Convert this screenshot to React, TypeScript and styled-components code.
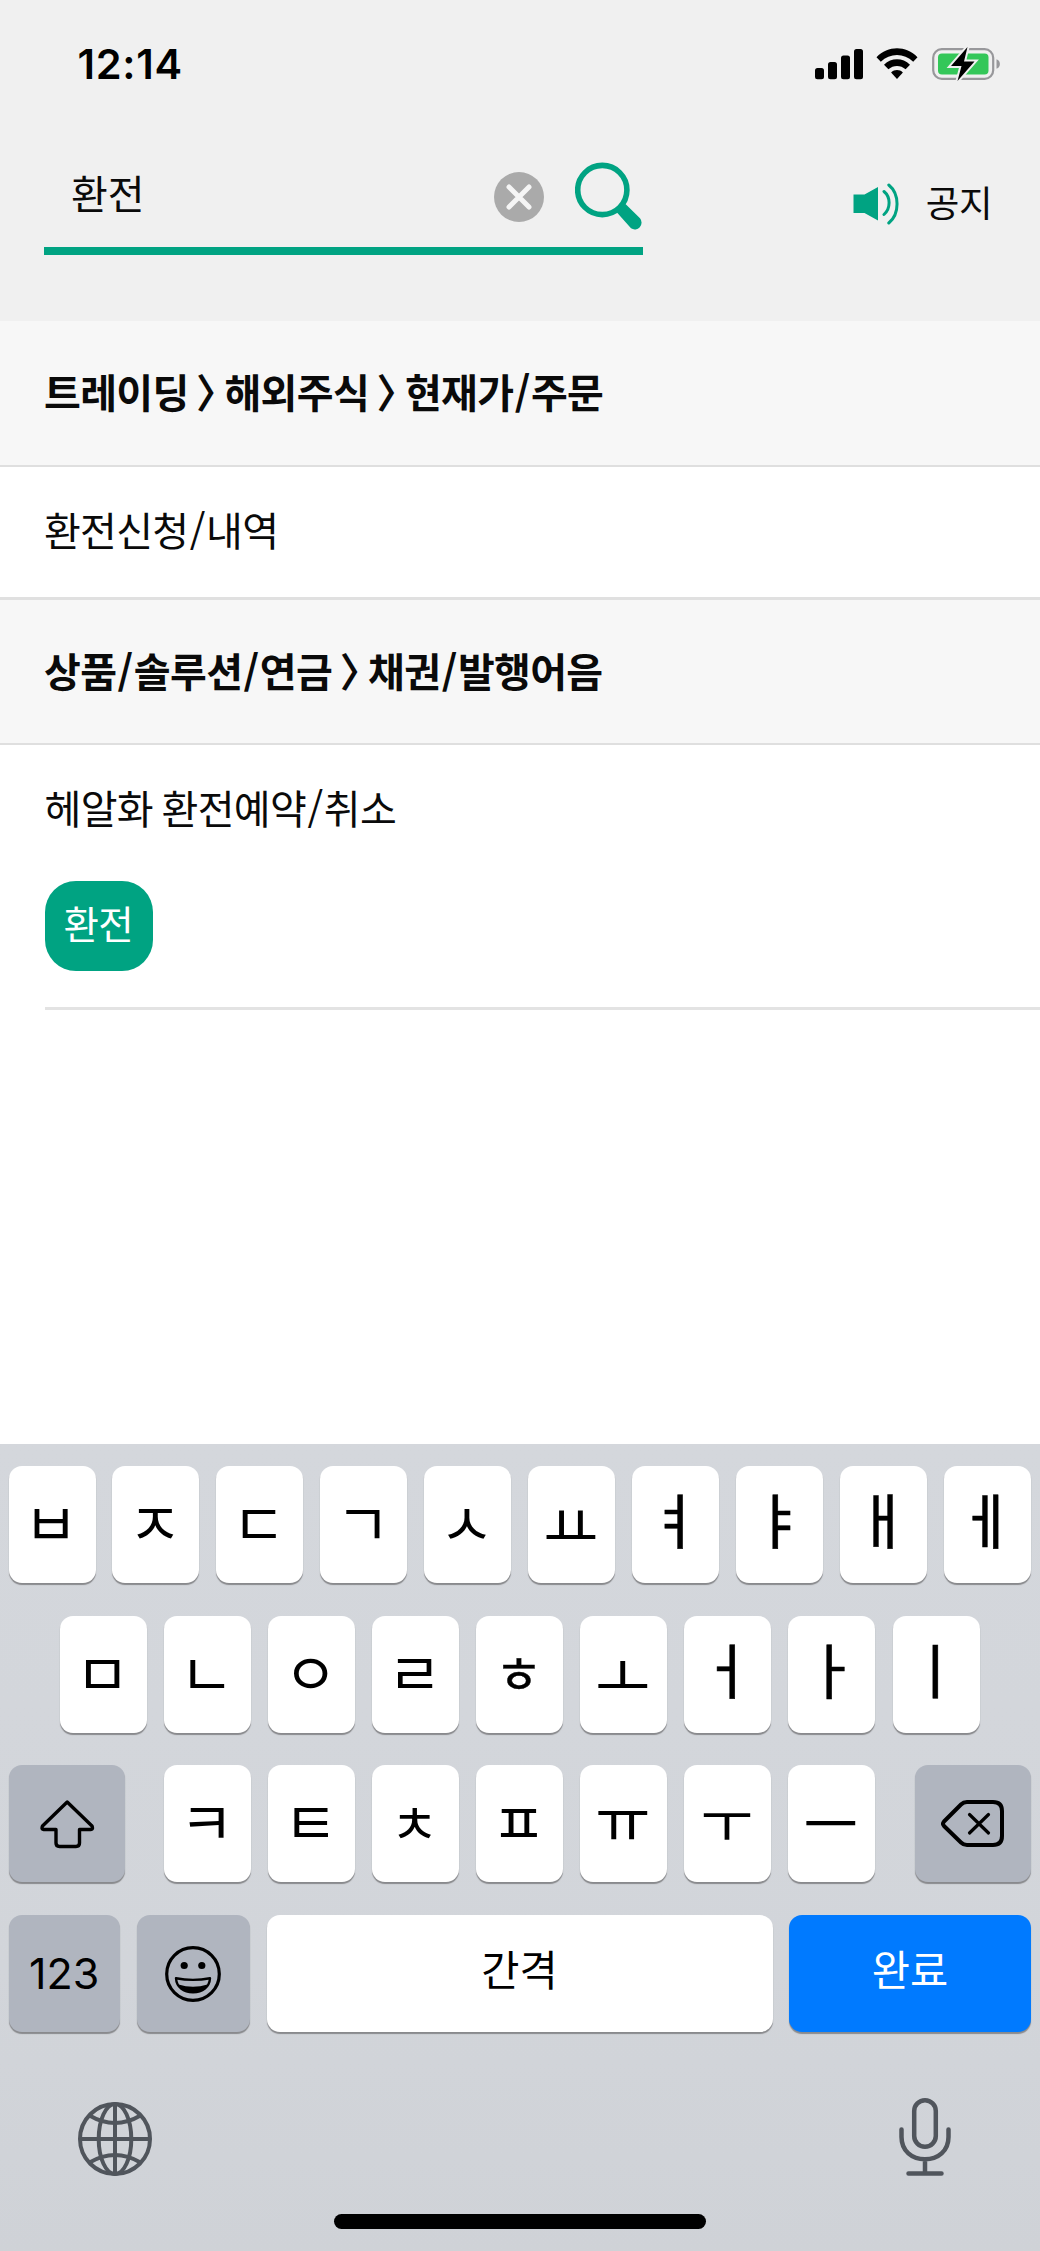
import React from "react";
import styled, { createGlobalStyle, css } from "styled-components";

const GREEN = "#00a382";

const GlobalStyle = createGlobalStyle`
  * { box-sizing: border-box; }
  body { margin: 0; background: #ffffff; }
  button { border: 0; padding: 0; margin: 0; background: none; font: inherit; color: inherit; }
`;

const Screen = styled.div`
  display: flex;
  flex-direction: column;
  width: 1040px;
  height: 2251px;
  overflow: hidden;
  background: #ffffff;
  color: #0a0a0a;
  font-family: "Noto Sans CJK KR", "Noto Sans", sans-serif;
`;

const Header = styled.header`
  display: flex;
  flex-direction: column;
  height: 321px;
  flex: none;
  background: #f0f0f0;
`;

const StatusBar = styled.div`
  display: flex;
  align-items: center;
  justify-content: space-between;
  height: 128px;
  padding: 0 39px 0 77.5px;
`;

const Clock = styled.time`
  font: 600 41.5px/48px Inter, "Liberation Sans", sans-serif;
  letter-spacing: 0.7px;
  color: #000;
`;

const StatusIcons = styled.div`
  display: flex;
  align-items: center;
  gap: 13.6px;
`;

const SearchRow = styled.div`
  display: flex;
  align-items: flex-start;
  justify-content: space-between;
  padding: 20px 48px 0 44px;
`;

const SearchBox = styled.div`
  display: flex;
  align-items: center;
  width: 599px;
  height: 107px;
  padding: 0 0 0 27px;
  border-bottom: 8px solid ${GREEN};
`;

const Query = styled.span`
  flex: 1;
  font-size: 40px;
  line-height: 56px;
  margin-bottom: 11px;
`;

const ClearButton = styled.button`
  display: flex;
  margin: 0 31px 2px 0;
`;

const SearchButton = styled.button`
  display: flex;
  margin-bottom: 3px;
`;

const Notice = styled.button`
  display: flex;
  align-items: center;
  gap: 27px;
  height: 56px;
  margin-top: 28px;
`;

const NoticeLabel = styled.span`
  margin-bottom: 4px;
  font-size: 36.5px;
  line-height: 52px;
  letter-spacing: -0.5px;
`;

const SectionTitle = styled.h2<{ $height: number }>`
  display: flex;
  align-items: center;
  height: ${(p) => p.$height}px;
  flex: none;
  margin: 0;
  padding: 0 44px 4px;
  background: #f7f7f7;
  border-bottom: 2px solid #dfdfdf;
  font-size: 40px;
  font-weight: 700;
  letter-spacing: -0.65px;
  white-space: pre;
`;

const Chevron = styled.span`
  margin: 0 9px 0 7.5px;
  font-feature-settings: "halt" 1;
`;

const SlashMark = styled.span`
  margin: 0 1.3px;
`;

const ResultItem = styled.div`
  display: flex;
  align-items: center;
  height: 133px;
  flex: none;
  padding: 0 44px 7px;
  border-bottom: 3px solid #e0e0e0;
  font-size: 40px;
  letter-spacing: -0.7px;
`;

const TaggedResult = styled.div`
  display: flex;
  flex-direction: column;
  align-items: flex-start;
  height: 265px;
  flex: none;
  margin-left: 44.5px;
  padding-top: 32px;
  border-bottom: 3px solid #e3e3e3;
  font-size: 40px;
  line-height: 60px;
  letter-spacing: -0.65px;
  word-spacing: -2px;
`;

const Tag = styled.span`
  display: flex;
  justify-content: center;
  width: 108.5px;
  height: 90px;
  margin-top: 44px;
  padding: 11px 1px 0 0;
  border-radius: 31px;
  background: ${GREEN};
  color: #fff;
  font-size: 38.5px;
`;

const Keyboard = styled.section`
  display: flex;
  flex-direction: column;
  gap: 32px;
  height: 807px;
  flex: none;
  margin-top: auto;
  padding: 22px 9px 0 8.5px;
  background: linear-gradient(#d4d7dc, #d2d5da 65%, #cfd2d7);
`;

const KeyRow = styled.div<{ $inset?: number }>`
  display: flex;
  justify-content: space-between;
  height: 117.7px;
  flex: none;
  padding: 0 ${(p) => p.$inset ?? 0}px;
`;

const LetterGroup = styled.div`
  display: flex;
  gap: 17px;
`;

type Tone = "light" | "dark" | "blue";

const tones = {
  light: css`background: #fff; color: #000;`,
  dark: css`background: #b0b5bf; color: #000;`,
  blue: css`background: #007aff; color: #fff;`,
};

const Key = styled.button<{ $width?: number; $tone?: Tone; $size?: number; $lift?: number }>`
  display: flex;
  align-items: center;
  justify-content: center;
  width: ${(p) => p.$width ?? 87}px;
  height: 117px;
  padding-bottom: ${(p) => p.$lift ?? 0}px;
  border-radius: 13px;
  box-shadow: 0 2px 1px #898a8d;
  font-size: ${(p) => p.$size ?? 40}px;
  line-height: 60px;
  ${(p) => tones[p.$tone ?? "light"]}
`;

const LetterKey = styled(Key)<{ $stroke: number }>`
  padding-right: 2px;
  -webkit-text-stroke: ${(p) => p.$stroke}px #000;
`;

const NumberLabel = styled.span`
  font: 400 43px/60px Inter, "Liberation Sans", sans-serif;
  margin-bottom: 1px;
`;

const Dock = styled.div`
  display: flex;
  justify-content: space-between;
  align-items: center;
  height: 82px;
  margin-top: 33px;
  padding: 0 80px 0 68.5px;
`;

const MicButton = styled.button`
  display: flex;
  margin-bottom: 4px;
`;

const HomeBar = styled.div`
  width: 372px;
  height: 15px;
  flex: none;
  margin: 2px auto 0;
  border-radius: 8px;
  background: #000;
`;

const Signal = () => (
  <svg width="48" height="32" viewBox="815 48 48 32">
    <rect x="815" y="68" width="9" height="11.3" rx="2.5" />
    <rect x="828" y="62" width="9" height="17.3" rx="2.5" />
    <rect x="841" y="55.5" width="9" height="23.8" rx="2.5" />
    <rect x="854" y="49" width="9" height="30.3" rx="2.5" />
  </svg>
);

const Wifi = () => (
  <svg width="42" height="32" viewBox="876.5 48 42 32">
    <path d="M877 57.2C888.500 45.300 906.500 45.300 918 57.200L913.700 61.700C904.500 52.700 890.500 52.700 881.300 61.700Z" />
    <path d="M884.500 64.700C891.800 57.500 903.200 57.500 910.500 64.700L906.100 69.300C901.200 64.800 893.800 64.800 888.900 69.300Z" />
    <path d="M891.600 72.500C895.200 69.300 899.800 69.300 903.400 72.500L897.500 79Z" />
  </svg>
);

const Battery = () => (
  <svg width="69" height="34" viewBox="932 47 69 34">
    <rect x="933.2" y="49.200" width="60" height="29.600" rx="8.500" fill="none" stroke="#98989b" strokeWidth="2.200" />
    <path d="M996.500 59.200C1001 60.500 1001 67.500 996.500 68.800Z" fill="#98989b" />
    <rect x="938" y="53.500" width="50.500" height="21" rx="4" fill="#34c759" />
    <path d="M967.500 47L951 66H961.500L957.500 81L974.500 61.500H964Z" fill="#000" stroke="#f0f0f0" strokeWidth="4" paintOrder="stroke" />
  </svg>
);

const Clear = () => (
  <svg width="50" height="50" viewBox="0 0 50 50">
    <circle cx="25" cy="25" r="25" fill="#aaaaaa" />
    <path d="M15 15L35 35M35 15L15 35" stroke="#f5f5f5" strokeWidth="5" strokeLinecap="round" />
  </svg>
);

const Magnifier = () => (
  <svg width="68" height="69" viewBox="575 161 68 69">
    <circle cx="602.300" cy="189" r="24.600" fill="none" stroke={GREEN} strokeWidth="5.600" />
    <path d="M616.500 211L625.500 203L640 217.300A6.800 6.800 0 0 1 631 227.300Z" fill={GREEN} />
  </svg>
);

const Speaker = () => (
  <svg width="46" height="42" viewBox="853.5 183 46 42">
    <path d="M854 194.500H865L878.500 187V220.500L865 213H854Z" fill={GREEN} />
    <path d="M884.500 191.500C891.300 197 891.300 208.500 884.500 214.500M889.300 185C900.300 194 900.300 214 889.300 223" fill="none" stroke={GREEN} strokeWidth="3" strokeLinecap="round" />
  </svg>
);

const Shift = () => (
  <svg width="58" height="50" viewBox="38 1799 58 50" fill="none" stroke="#000" strokeWidth="3.400" strokeLinejoin="round">
    <path d="M67.200 1802L92 1826Q93.500 1829.500 91 1829.500H79.500V1843Q79.500 1846.500 76 1846.500H59.500Q56 1846.500 56 1843V1829.500H43.500Q41 1829.500 42.500 1826Z" />
  </svg>
);

const Backspace = () => (
  <svg width="64" height="50" viewBox="941 1799 64 50" fill="none" stroke="#000" strokeWidth="4" strokeLinejoin="round" strokeLinecap="round">
    <path d="M967 1802H993Q1002 1802 1002 1811V1836Q1002 1845 993 1845H967Q963.500 1845 961 1842.500L944 1826Q942 1823.800 944 1821.500L961 1804.500Q963.500 1802 967 1802Z" />
    <path d="M969.500 1814.500L988.500 1833M988.500 1814.500L969.500 1833" strokeWidth="3.200" />
  </svg>
);

const Smiley = () => (
  <svg width="58" height="58" viewBox="-29 -29 58 58">
    <circle r="26.300" fill="none" stroke="#000" strokeWidth="3.200" />
    <circle cx="-8.800" cy="-8.500" r="3.600" />
    <circle cx="8.800" cy="-8.500" r="3.600" />
    <path d="M-17 4.200Q0 7.500 17 4.200C16.500 13 9.500 18.300 0 18.300S-16.500 13 -17 4.200Z" fill="none" stroke="#000" strokeWidth="2.400" strokeLinejoin="round" />
    <path d="M-14.500 10.500Q0 15 14.500 10.500C11 17 6 18.500 0 18.500S-11 17 -14.500 10.500Z" />
  </svg>
);

const Globe = () => (
  <svg width="76" height="76" viewBox="-38 -38 76 76" fill="none" stroke="#50555c" strokeWidth="4">
    <circle r="35" />
    <path d="M0 -35V35M-35 0H35" />
    <ellipse rx="16.300" ry="35" />
    <path d="M-25.500 -23.500Q0 -8.500 25.500 -23.500M-25.500 23.500Q0 8.500 25.500 23.500" />
  </svg>
);

const Mic = () => (
  <svg width="52" height="80" viewBox="899 2097 52 80" fill="none" stroke="#50555c" strokeWidth="4.500" strokeLinecap="round">
    <rect x="914.200" y="2100.300" width="21.600" height="46.500" rx="10.800" />
    <path d="M901.500 2129.500V2137C901.500 2151 912 2159.300 925 2159.300S948.500 2151 948.500 2137V2129.500M925 2160V2173M908.500 2173.500H941.500" />
  </svg>
);

const rows = [
  ["ㅂ", "ㅈ", "ㄷ", "ㄱ", "ㅅ", "ㅛ", "ㅕ", "ㅑ", "ㅐ", "ㅔ"],
  ["ㅁ", "ㄴ", "ㅇ", "ㄹ", "ㅎ", "ㅗ", "ㅓ", "ㅏ", "ㅣ"],
  ["ㅋ", "ㅌ", "ㅊ", "ㅍ", "ㅠ", "ㅜ", "ㅡ"],
];

// Optical adjustments: vowels are set larger, stacked letters smaller.
const optics: Record<string, { size?: number; lift?: number; stroke?: number }> = {
  "ㅎ": { size: 52, lift: 4, stroke: 0.4 },
  "ㅊ": { size: 53, lift: 6 },
  "ㅛ": { size: 60, lift: 3 },
  "ㅗ": { size: 60, lift: 0 },
  "ㅠ": { size: 60, lift: 14 },
  "ㅜ": { size: 57, lift: 12 },
  "ㅡ": { size: 60, lift: 6 },
  "ㅕ": { size: 60, lift: 14, stroke: 0.5 },
  "ㅑ": { size: 60, lift: 14, stroke: 0.5 },
  "ㅐ": { size: 60, lift: 14, stroke: 0.5 },
  "ㅔ": { size: 60, lift: 14, stroke: 0.5 },
  "ㅓ": { size: 60, lift: 12, stroke: 0.5 },
  "ㅏ": { size: 60, lift: 12, stroke: 0.5 },
  "ㅣ": { size: 60, lift: 12, stroke: 0.5 },
};

const letters = (row: string[]) =>
  row.map((c) => (
    <LetterKey
      key={c}
      $size={optics[c]?.size ?? 59}
      $lift={optics[c]?.lift ?? 7}
      $stroke={optics[c]?.stroke ?? 0}
    >
      {c}
    </LetterKey>
  ));

const Slash = () => <SlashMark>/</SlashMark>;

export default function App() {
  return (
    <Screen lang="ko">
      <GlobalStyle />
      <Header>
        <StatusBar>
          <Clock>12:14</Clock>
          <StatusIcons>
            <Signal />
            <Wifi />
            <Battery />
          </StatusIcons>
        </StatusBar>
        <SearchRow>
          <SearchBox>
            <Query>환전</Query>
            <ClearButton aria-label="지우기"><Clear /></ClearButton>
            <SearchButton aria-label="검색"><Magnifier /></SearchButton>
          </SearchBox>
          <Notice><Speaker /><NoticeLabel>공지</NoticeLabel></Notice>
        </SearchRow>
      </Header>

      <SectionTitle $height={146}>
        트레이딩<Chevron>〉</Chevron>해외주식<Chevron>〉</Chevron>현재가<Slash />주문
      </SectionTitle>
      <ResultItem>환전신청<Slash />내역</ResultItem>
      <SectionTitle $height={145}>
        상품<Slash />솔루션<Slash />연금<Chevron>〉</Chevron>채권<Slash />발행어음
      </SectionTitle>
      <TaggedResult>
        <span>헤알화 환전예약<Slash />취소</span>
        <Tag>환전</Tag>
      </TaggedResult>

      <Keyboard>
        <KeyRow>{letters(rows[0])}</KeyRow>
        <KeyRow $inset={51.5}>{letters(rows[1])}</KeyRow>
        <KeyRow>
          <Key $tone="dark" $width={116.5} aria-label="시프트"><Shift /></Key>
          <LetterGroup>{letters(rows[2])}</LetterGroup>
          <Key $tone="dark" $width={116.5} aria-label="삭제"><Backspace /></Key>
        </KeyRow>
        <KeyRow>
          <Key $tone="dark" $width={111.5}><NumberLabel>123</NumberLabel></Key>
          <Key $tone="dark" $width={113.5} aria-label="이모티콘"><Smiley /></Key>
          <Key $width={506} $size={41.5} $lift={12}>간격</Key>
          <Key $tone="blue" $width={242} $size={41.5} $lift={12}>완료</Key>
        </KeyRow>
        <Dock>
          <Globe />
          <MicButton aria-label="음성 입력"><Mic /></MicButton>
        </Dock>
        <HomeBar />
      </Keyboard>
    </Screen>
  );
}
